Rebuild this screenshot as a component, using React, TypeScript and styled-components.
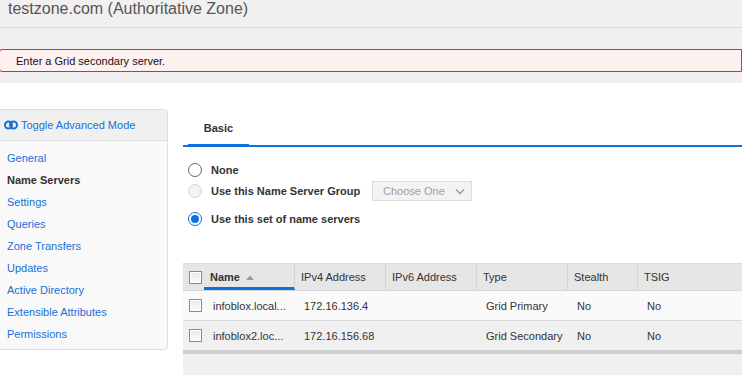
import React from "react";
import styled, { createGlobalStyle } from "styled-components";

const Global = createGlobalStyle`
  html, body { margin: 0; padding: 0; background: #fff; }
  body { font-family: "Liberation Sans", Arial, sans-serif; font-size: 11px; color: #333; width: 742px; height: 375px; overflow: hidden; }
`;

const Page = styled.div`
  width: 742px;
  height: 375px;
  display: flex;
  flex-direction: column;
`;

const TitleBar = styled.div`
  height: 27px;
  background: #f0f0f0;
  border-bottom: 1px solid #dcdcdc;
  padding-left: 8px;
  display: flex;
  align-items: flex-start;
`;

const Title = styled.h1`
  margin: 0;
  font-weight: normal;
  font-size: 16px;
  line-height: 18px;
  color: #555;
`;

const AlertArea = styled.div`
  background: #f0f0f0;
  padding: 21px 0 11px 0;
`;

const Alert = styled.div`
  height: 21px;
  background: #fff0f0;
  border: 1px solid #f0222c;
  border-radius: 3px 0 0 3px;
  margin-left: -1px;
  padding-left: 16px;
  display: flex;
  align-items: center;
  color: #111;
  font-size: 11px;
`;

const Body = styled.div`
  flex: 1;
  display: flex;
  padding-top: 26px;
  gap: 15px;
`;

const Sidebar = styled.div`
  width: 168px;
  height: 241px;
  background: #f9f9f9;
  border: 1px solid #dedede;
  border-left: none;
  border-radius: 0 4px 4px 0;
  box-sizing: border-box;
`;

const SideHeader = styled.div`
  height: 31px;
  background: #f0f0f0;
  border-bottom: 1px solid #dedede;
  border-radius: 0 4px 0 0;
  display: flex;
  align-items: center;
  padding-left: 4px;
  gap: 3px;
  color: #1a6fd8;
  font-size: 11px;
  box-sizing: border-box;
`;

const SideList = styled.div`
  display: flex;
  flex-direction: column;
  padding-top: 10px;
`;

const SideItem = styled.div<{ $active?: boolean }>`
  height: 22px;
  line-height: 14px;
  padding-left: 7px;
  color: ${(p) => (p.$active ? "#333" : "#1a6fd8")};
  font-weight: ${(p) => (p.$active ? "bold" : "normal")};
  font-size: 11px;
`;

const Main = styled.div`
  flex: 1;
  display: flex;
  flex-direction: column;
  min-width: 0;
`;

const TabBar = styled.div`
  height: 38px;
  border-bottom: 2px solid #0a72dc;
  display: flex;
  align-items: flex-end;
  padding-left: 5px;
  box-sizing: border-box;
`;

const Tab = styled.div`
  width: 61px;
  height: 26px;
  text-align: center;
  font-size: 11px;
  font-weight: bold;
  color: #333;
  border-bottom: 3px solid #0a72dc;
  margin-bottom: -2px;
  box-sizing: border-box;
  padding-top: 1px;
`;

const RadioGroup = styled.div`
  display: flex;
  flex-direction: column;
  padding: 14px 0 0 5px;
`;

const RadioRow = styled.div<{ $h: number }>`
  height: ${(p) => p.$h}px;
  display: flex;
  align-items: center;
  gap: 9px;
  font-weight: bold;
  font-size: 11px;
  color: #333;
`;

const RadioCircle = styled.span<{ $state: "off" | "disabled" | "on" }>`
  width: 14px;
  height: 14px;
  border-radius: 50%;
  box-sizing: border-box;
  border: 1px solid
    ${(p) => (p.$state === "on" ? "#0a72dc" : p.$state === "disabled" ? "#d6d6d6" : "#666")};
  background: ${(p) => (p.$state === "disabled" ? "#f3f3f3" : "#fff")};
  display: flex;
  align-items: center;
  justify-content: center;
  &::after {
    content: "";
    width: 8px;
    height: 8px;
    border-radius: 50%;
    background: #0a72dc;
    display: ${(p) => (p.$state === "on" ? "block" : "none")};
  }
`;

const RadioLabel = styled.span`
  width: 152px;
`;

const Select = styled.div`
  width: 100px;
  height: 20px;
  box-sizing: border-box;
  background: #f3f3f3;
  border: 1px solid #ddd;
  display: flex;
  align-items: center;
  justify-content: space-between;
  padding: 0 6px 0 10px;
  color: #a0a0a0;
  font-weight: normal;
`;

const Table = styled.div`
  margin-top: 30px;
  flex: 1;
  background: #f0f0f0;
  display: flex;
  flex-direction: column;
`;

const Cols = "21px 91px 91px 91px 91px 70px 1fr";

const HeadRow = styled.div`
  display: grid;
  grid-template-columns: ${Cols};
  height: 27px;
  background: #e6e6e6;
  border-top: 1px solid #dcdcdc;
  box-sizing: border-box;
`;

const HeadCell = styled.div<{ $sorted?: boolean; $last?: boolean }>`
  display: flex;
  align-items: center;
  padding-left: 6px;
  gap: 6px;
  font-size: 11px;
  color: #333;
  font-weight: ${(p) => (p.$sorted ? "bold" : "normal")};
  border-right: ${(p) => (p.$last ? "none" : "1px solid #d4d4d4")};
  border-bottom: ${(p) => (p.$sorted ? "3px solid #0a72dc" : "none")};
  padding-top: ${(p) => (p.$sorted ? "3px" : "0")};
  box-sizing: border-box;
`;

const CheckCell = styled.div`
  display: flex;
  align-items: center;
  justify-content: center;
  padding-left: 3px;
`;

const Check = styled.span`
  width: 13px;
  height: 13px;
  box-sizing: border-box;
  border: 1px solid #8a8a8a;
  background: linear-gradient(#e8e8e8, #fafafa);
  box-shadow: inset 0 0 0 1px #fff;
`;

const Row = styled.div<{ $alt?: boolean }>`
  display: grid;
  grid-template-columns: ${Cols};
  height: 30px;
  background: ${(p) => (p.$alt ? "#f0f0f0" : "#fafafa")};
  border-top: 1px solid #d8d8d8;
  box-sizing: border-box;
`;

const Cell = styled.div`
  display: flex;
  align-items: center;
  padding-left: 9px;
  font-size: 11px;
  color: #333;
  white-space: nowrap;
  overflow: hidden;
`;

const Scrollbar = styled.div`
  height: 4px;
  background: #cfcfcf;
`;

const ToggleIcon = () => (
  <svg width="14" height="10" viewBox="0 0 14 10">
    <circle cx="4.5" cy="5" r="3.5" fill="none" stroke="#1a6fd8" strokeWidth="2" />
    <circle cx="9.5" cy="5" r="3.5" fill="none" stroke="#1a6fd8" strokeWidth="2" />
  </svg>
);

const Chevron = () => (
  <svg width="10" height="7" viewBox="0 0 10 7">
    <path d="M1 1.5 L5 5.5 L9 1.5" fill="none" stroke="#a0a0a0" strokeWidth="1.6" />
  </svg>
);

const SortArrow = () => (
  <svg width="8" height="5" viewBox="0 0 8 5">
    <path d="M0 5 L4 0.5 L8 5 Z" fill="#999" />
  </svg>
);

const nav = [
  "General",
  "Name Servers",
  "Settings",
  "Queries",
  "Zone Transfers",
  "Updates",
  "Active Directory",
  "Extensible Attributes",
  "Permissions",
];

const rows = [
  { name: "infoblox.local...", v4: "172.16.136.4", type: "Grid Primary" },
  { name: "infoblox2.loc...", v4: "172.16.156.68", type: "Grid Secondary" },
];

export default function App() {
  return (
    <Page>
      <Global />
      <TitleBar>
        <Title>testzone.com (Authoritative Zone)</Title>
      </TitleBar>
      <AlertArea>
        <Alert>Enter a Grid secondary server.</Alert>
      </AlertArea>
      <Body>
        <Sidebar>
          <SideHeader>
            <ToggleIcon />
            Toggle Advanced Mode
          </SideHeader>
          <SideList>
            {nav.map((n) => (
              <SideItem key={n} $active={n === "Name Servers"}>
                {n}
              </SideItem>
            ))}
          </SideList>
        </Sidebar>
        <Main>
          <TabBar>
            <Tab>Basic</Tab>
          </TabBar>
          <RadioGroup>
            <RadioRow $h={17}>
              <RadioCircle $state="off" />
              <RadioLabel>None</RadioLabel>
            </RadioRow>
            <RadioRow $h={26}>
              <RadioCircle $state="disabled" />
              <RadioLabel>Use this Name Server Group</RadioLabel>
              <Select>
                Choose One
                <Chevron />
              </Select>
            </RadioRow>
            <RadioRow $h={29}>
              <RadioCircle $state="on" />
              <RadioLabel>Use this set of name servers</RadioLabel>
            </RadioRow>
          </RadioGroup>
          <Table>
            <HeadRow>
              <CheckCell>
                <Check />
              </CheckCell>
              <HeadCell $sorted>
                Name <SortArrow />
              </HeadCell>
              <HeadCell>IPv4 Address</HeadCell>
              <HeadCell>IPv6 Address</HeadCell>
              <HeadCell>Type</HeadCell>
              <HeadCell>Stealth</HeadCell>
              <HeadCell $last>TSIG</HeadCell>
            </HeadRow>
            {rows.map((r, i) => (
              <Row key={r.name} $alt={i === 1}>
                <CheckCell>
                  <Check />
                </CheckCell>
                <Cell>{r.name}</Cell>
                <Cell>{r.v4}</Cell>
                <Cell></Cell>
                <Cell>{r.type}</Cell>
                <Cell>No</Cell>
                <Cell>No</Cell>
              </Row>
            ))}
            <Scrollbar />
          </Table>
        </Main>
      </Body>
    </Page>
  );
}
